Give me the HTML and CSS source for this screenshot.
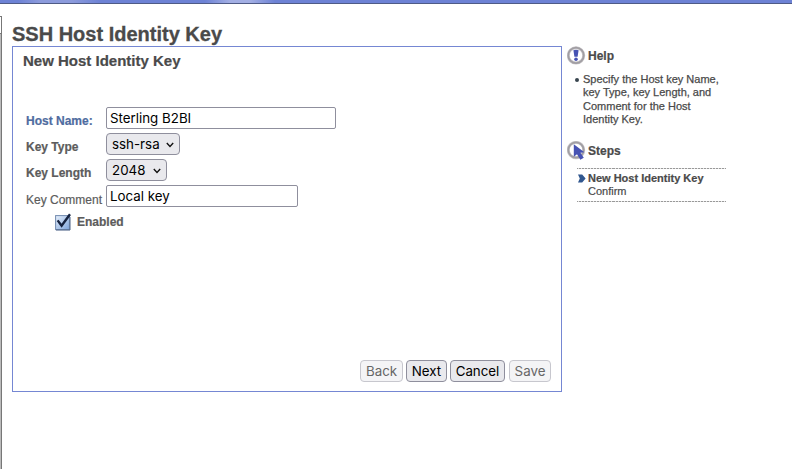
FILE: index.html
```html
<!DOCTYPE html>
<html lang="en">
<head>
<meta charset="utf-8">
<title>SSH Host Identity Key</title>
<link rel="stylesheet" href="styles.css">
</head>
<body>
<header class="banner"></header>
<div class="page">
  <div class="nav-edge"></div>
  <main class="main">
    <h1><span>SSH Host Identity Key</span></h1>
    <form class="panel">
      <h2><span>New Host Identity Key</span></h2>
      <div class="fields">
        <label class="required" for="host">Host Name:</label>
        <input class="control host" id="host" type="text" value="Sterling B2BI">
        <label class="type" for="type">Key Type</label>
        <button class="control select" id="type" type="button"><span>ssh-rsa</span><svg viewBox="0 0 8 6"><path d="M.8 1.1 4 4.4 7.2 1.1"/></svg></button>
        <label class="length" for="length">Key Length</label>
        <button class="control select" id="length" type="button"><span class="digits">2048</span><svg viewBox="0 0 8 6"><path d="M.8 1.1 4 4.4 7.2 1.1"/></svg></button>
        <label class="plain" for="comment">Key Comment</label>
        <input class="control comment" id="comment" type="text" value="Local key">
      </div>
      <div class="enabled">
        <svg class="check" viewBox="0 0 17 18">
          <defs><linearGradient id="box" x1="0" y1="0" x2="1" y2="1"><stop offset="0" stop-color="#e8f1fc"/><stop offset="1" stop-color="#7da4dc"/></linearGradient></defs>
          <rect x=".6" y="2.6" width="13.8" height="14" fill="url(#box)" stroke="#7189ae"/>
          <path d="M15 4v13H1" fill="none" stroke="#4c6285"/>
          <path d="M2.6 7.4 6.6 12.7 15 1.2" fill="none" stroke="#172340" stroke-width="2.4"/>
        </svg>
        <span>Enabled</span>
      </div>
      <div class="actions">
        <button class="back" type="button" disabled>Back</button>
        <button class="next" type="button">Next</button>
        <button class="cancel" type="button">Cancel</button>
        <button class="save" type="button" disabled>Save</button>
      </div>
    </form>
  </main>
  <aside class="side">
    <h3><svg viewBox="0 0 20 20"><circle cx="9" cy="9.4" r="7.7" fill="#fff" stroke="#c8c6c9" stroke-width="3"/><circle cx="9" cy="9.4" r="7.7" fill="none" stroke="#a19ea3" stroke-width="1.7"/><path d="M6.4 4.3Q9 3 11.6 4.3L10.6 10.8H7.4Z" fill="#4652b3"/><circle cx="9" cy="13.2" r="1.8" fill="#4652b3"/></svg><span>Help</span></h3>
    <ul class="help">
      <li><span class="l1">Specify the Host key Name,</span><br><span class="l2">key Type, key Length, and</span><br><span class="l3">Comment for the Host</span><br><span class="l4">Identity Key.</span></li>
    </ul>
    <h3 class="steps-title"><svg viewBox="0 0 20 20"><circle cx="9" cy="9" r="7.7" fill="#fff" stroke="#c8c6c9" stroke-width="3"/><circle cx="9" cy="9" r="7.7" fill="none" stroke="#a19ea3" stroke-width="1.7"/><path d="M6.8 3.3V15.8L10 13.2 13.3 18.8 16.8 16.8 13.4 11.8 17.4 11.3Z" fill="#4652b3"/></svg><span>Steps</span></h3>
    <ol class="steps">
      <li class="current"><svg viewBox="0 0 8 9"><path d="M0 .5h4.2L7.6 4.5 4.2 8.5H0L1.8 4.5Z" fill="#31578f"/></svg><span>New Host Identity Key</span></li>
      <li><span class="confirm">Confirm</span></li>
    </ol>
  </aside>
</div>
</body>
</html>
```
FILE: styles.css
```css
* { box-sizing: border-box; }
body { margin: 0; height: 469px; overflow: hidden; background: #fff; color: #4a4a4a; font-family: "Liberation Sans", Arial, sans-serif; display: flex; flex-direction: column; }
.banner { height: 4px; border-bottom: 1px solid #4f5b86; background: linear-gradient(90deg, #6d82d5 0 18px, #8c9bdc 40px 72px, #6d82d5 100px 205px, #a3afe4 230px 250px, #6d82d5 275px); }
.page { display: flex; flex: 1; }
.nav-edge { width: 2px; margin-top: 12px; border-top: 1px solid #777; border-right: 1px solid #777; background: linear-gradient(#fff 0 16px, #777 16px 17px, #bbb 17px); }
.main { width: 550px; margin-left: 10px; padding-top: 18px; }
h1, h2, h3, ul, ol { margin: 0; padding: 0; }
h1 { height: 24px; font-size: 20px; line-height: 24px; white-space: nowrap; -webkit-text-stroke: .3px #4a4a4a; }
.panel { height: 346px; border: 1px solid #7587d3; display: flex; flex-direction: column; }
h2 { height: 28px; padding-left: 10px; font-size: 15px; line-height: 28px; -webkit-text-stroke: .2px #4a4a4a; }
.fields { display: grid; grid-template-columns: 80px auto; grid-auto-rows: 22px; row-gap: 4px; justify-content: start; justify-items: start; padding-left: 13px; margin-top: 32px; }
label { font-size: 12px; font-weight: bold; line-height: 22px; padding-top: 3px; color: #5c5c5c; white-space: nowrap; -webkit-text-stroke: .2px currentColor; }
.required { color: #4f6ca0; }
.plain { font-weight: normal; padding-top: 4px; }
.control { height: 22px; border: 1px solid #8f8f9d; border-radius: 2px; background: #fff; color: #000; font: 13.33px/20px Inter, sans-serif; padding: 0 3px; outline: 0; }
.host { width: 230px; }
.comment { width: 192px; }
.select { display: flex; align-items: center; justify-content: space-between; border-radius: 4px; background: #e9e9ed; padding: 0 5px; }
#type { width: 74px; }
#length { width: 61px; }
.select svg { width: 8px; height: 6px; margin-top: 1px; fill: none; stroke: #111; stroke-width: 1.4; }
.enabled { display: flex; align-items: center; height: 20px; margin: 5px 0 0 42px; font-size: 12px; font-weight: bold; color: #5c5c5c; -webkit-text-stroke: .2px #5c5c5c; }
.check { width: 17px; height: 18px; margin-right: 5px; }
.actions { display: flex; justify-content: flex-end; margin: auto 10px 9px; }
.actions button { height: 22px; padding: 0; border: 1px solid #8f8f9d; border-radius: 4px; background: #e9e9ed; color: #000; font: 13.33px/20px Inter, sans-serif; }
.actions button:disabled { border-color: #c7c7ce; background: #f4f4f6; color: #666; }
.actions .back { width: 43px; margin-right: 3px; }
.actions .next { width: 41px; margin-right: 3px; }
.actions .cancel { width: 55px; margin-right: 4px; }
.actions .save { width: 42px; }
.side { width: 170px; margin-left: 5px; padding-top: 42px; }
h3 { display: flex; align-items: center; height: 20px; font-size: 12px; -webkit-text-stroke: .2px #4a4a4a; }
h3 svg { width: 20px; height: 20px; margin-right: 1px; }
.help { margin-top: 7px; padding-left: 16px; list-style: none; font-size: 11px; line-height: 13.3px; white-space: nowrap; -webkit-text-stroke: .25px #4a4a4a; }
.help li::before { content: ""; float: left; width: 4px; height: 4px; margin: 5px 0 0 -8px; border-radius: 50%; background: #38454f; }
.steps-title { margin-top: 15px; }
.steps { width: 149px; height: 34px; margin: 7px 0 0 10px; list-style: none; border: 1px dashed #888; border-width: 1px 0; border-image: repeating-linear-gradient(90deg, #999 0 2px, #e6e6e6 2px 3px) 1; padding-top: 3px; font-size: 11px; line-height: 13px; -webkit-text-stroke: .2px #4a4a4a; }
.steps li { display: flex; align-items: center; height: 13px; padding-left: 11px; white-space: nowrap; }
.steps .current { padding-left: 1px; font-weight: bold; }
.steps svg { width: 8px; height: 9px; margin-right: 2px; }
```
